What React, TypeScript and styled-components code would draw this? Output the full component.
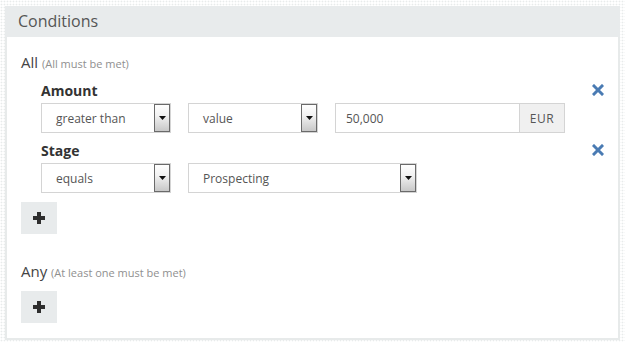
import { createGlobalStyle } from 'styled-components';
import styled from 'styled-components';

const GlobalStyle = createGlobalStyle`
	html, body {
		margin: 0;
		padding: 0;
	}
	body {
		font-family: 'Open Sans', 'Liberation Sans', sans-serif;
		background-color: #ffffff;
		background-image: radial-gradient(#e8ebeb 0.8px, transparent 1.1px);
		background-size: 3px 3px;
	}
`;

interface Condition {
	field: string;
	operator: string;
	kind: 'value' | 'select';
	mode?: string;
	value: string;
	unit?: string;
}

const allConditions: Condition[] = [
	{ field: 'Amount', operator: 'greater than', kind: 'value', mode: 'value', value: '50,000', unit: 'EUR' },
	{ field: 'Stage', operator: 'equals', kind: 'select', value: 'Prospecting' },
];

const PlusIcon = () => (
	<svg width="12" height="12" viewBox="0 0 12 12">
		<path d="M4 0h4v4h4v4H8v4H4V8H0V4h4z" fill="#2e2e2e" />
	</svg>
);

const CrossIcon = () => (
	<svg width="12" height="12" viewBox="0 0 12 12">
		<path d="M2 2L10 10M10 2L2 10" stroke="#4a7bb3" strokeWidth="3" strokeLinecap="square" />
	</svg>
);

function SelectBox({ text, width }: { text: string; width: number }) {
	return (
		<Select $width={width}>
			<SelectText>{text}</SelectText>
			<ArrowButton>
				<svg width="7" height="4" viewBox="0 0 7 4">
					<path d="M0 0h7L3.5 4z" fill="#111" />
				</svg>
			</ArrowButton>
		</Select>
	);
}

function ConditionRow({ condition }: { condition: Condition }) {
	return (
		<ConditionBlock>
			<LabelRow>
				<FieldLabel>{condition.field}</FieldLabel>
				<RemoveBtn aria-label="remove">
					<CrossIcon />
				</RemoveBtn>
			</LabelRow>
			<Controls>
				<SelectBox text={condition.operator} width={130} />
				{condition.kind === 'value' ? (
					<>
						<SelectBox text={condition.mode ?? ''} width={130} />
						<InputGroup>
							<ValueInput>{condition.value}</ValueInput>
							<Addon>{condition.unit}</Addon>
						</InputGroup>
					</>
				) : (
					<SelectBox text={condition.value} width={229} />
				)}
			</Controls>
		</ConditionBlock>
	);
}

export default function App() {
	return (
		<>
			<GlobalStyle />
			<Page>
				<Panel>
					<Header>Conditions</Header>
					<Body>
						<Group>
							<GroupTitle>
								All <Hint>(All must be met)</Hint>
							</GroupTitle>
							<ConditionList>
								{allConditions.map((c) => (
									<ConditionRow key={c.field} condition={c} />
								))}
							</ConditionList>
							<AddBtn $top={9} aria-label="add">
								<PlusIcon />
							</AddBtn>
						</Group>
						<Group $spaced>
							<GroupTitle>
								Any <Hint>(At least one must be met)</Hint>
							</GroupTitle>
							<AddBtn $top={8} aria-label="add">
								<PlusIcon />
							</AddBtn>
						</Group>
					</Body>
				</Panel>
			</Page>
		</>
	);
}

const Page = styled.div`
	padding: 6px 5px 5px;
`;

const Panel = styled.div`
	width: 615px;
	box-sizing: border-box;
	border: 2px solid #e7eaea;
	border-top: 0;
	background: #ffffff;
`;

const Header = styled.div`
	height: 31px;
	margin: 0 -2px;
	padding-left: 13px;
	background: #e8ebec;
	color: #555;
	font-size: 16px;
	line-height: 31px;
	font-weight: 400;
`;

const Body = styled.div`
	padding: 15px 14px 15px 14px;
`;

const Group = styled.div<{ $spaced?: boolean }>`
	display: flex;
	flex-direction: column;
	align-items: flex-start;
	margin-top: ${({ $spaced }) => ($spaced ? '27px' : '0')};
`;

const GroupTitle = styled.div`
	font-size: 15px;
	line-height: 20px;
	color: #444;
`;

const Hint = styled.span`
	font-size: 11px;
	color: #8f8f8f;
`;

const ConditionList = styled.div`
	display: flex;
	flex-direction: column;
	gap: 8px;
	align-self: stretch;
	margin: 7px 0 0 20px;
`;

const ConditionBlock = styled.div`
	display: flex;
	flex-direction: column;
	gap: 2px;
`;

const LabelRow = styled.div`
	display: flex;
	justify-content: space-between;
	align-items: center;
	height: 20px;
`;

const FieldLabel = styled.div`
	font-size: 14px;
	font-weight: 700;
	color: #333;
	line-height: 20px;
`;

const RemoveBtn = styled.span`
	display: flex;
	margin-right: 0;
	margin-top: -3px;
`;

const Controls = styled.div`
	display: flex;
	gap: 17px;
	height: 30px;
`;

const Select = styled.div<{ $width: number }>`
	position: relative;
	width: ${({ $width }) => $width}px;
	height: 30px;
	box-sizing: border-box;
	border: 1px solid #d4d4d4;
	display: flex;
	align-items: center;
	background: #fff;
`;

const SelectText = styled.span`
	padding-left: 14px;
	font-size: 12px;
	color: #555;
`;

const ArrowButton = styled.div`
	position: absolute;
	top: 0;
	right: 0;
	width: 16px;
	height: 28px;
	box-sizing: border-box;
	border: 1px solid #6a6a6a;
	background: linear-gradient(#ffffff 0%, #f2f2f2 40%, #c8c8c8 100%);
	display: flex;
	align-items: center;
	justify-content: center;
`;

const InputGroup = styled.div`
	display: flex;
	width: 230px;
	height: 30px;
	box-sizing: border-box;
	border: 1px solid #d4d4d4;
`;

const ValueInput = styled.div`
	flex: 1;
	display: flex;
	align-items: center;
	padding-left: 10px;
	font-size: 12px;
	color: #555;
`;

const Addon = styled.div`
	width: 44px;
	display: flex;
	align-items: center;
	justify-content: center;
	border-left: 1px solid #d4d4d4;
	background: #f0f0f0;
	font-size: 12px;
	color: #555;
	letter-spacing: 0.5px;
`;

const AddBtn = styled.div<{ $top: number }>`
	margin-top: ${({ $top }) => $top}px;
	width: 36px;
	height: 32px;
	background: #e8ebec;
	display: flex;
	align-items: center;
	justify-content: center;
`;
